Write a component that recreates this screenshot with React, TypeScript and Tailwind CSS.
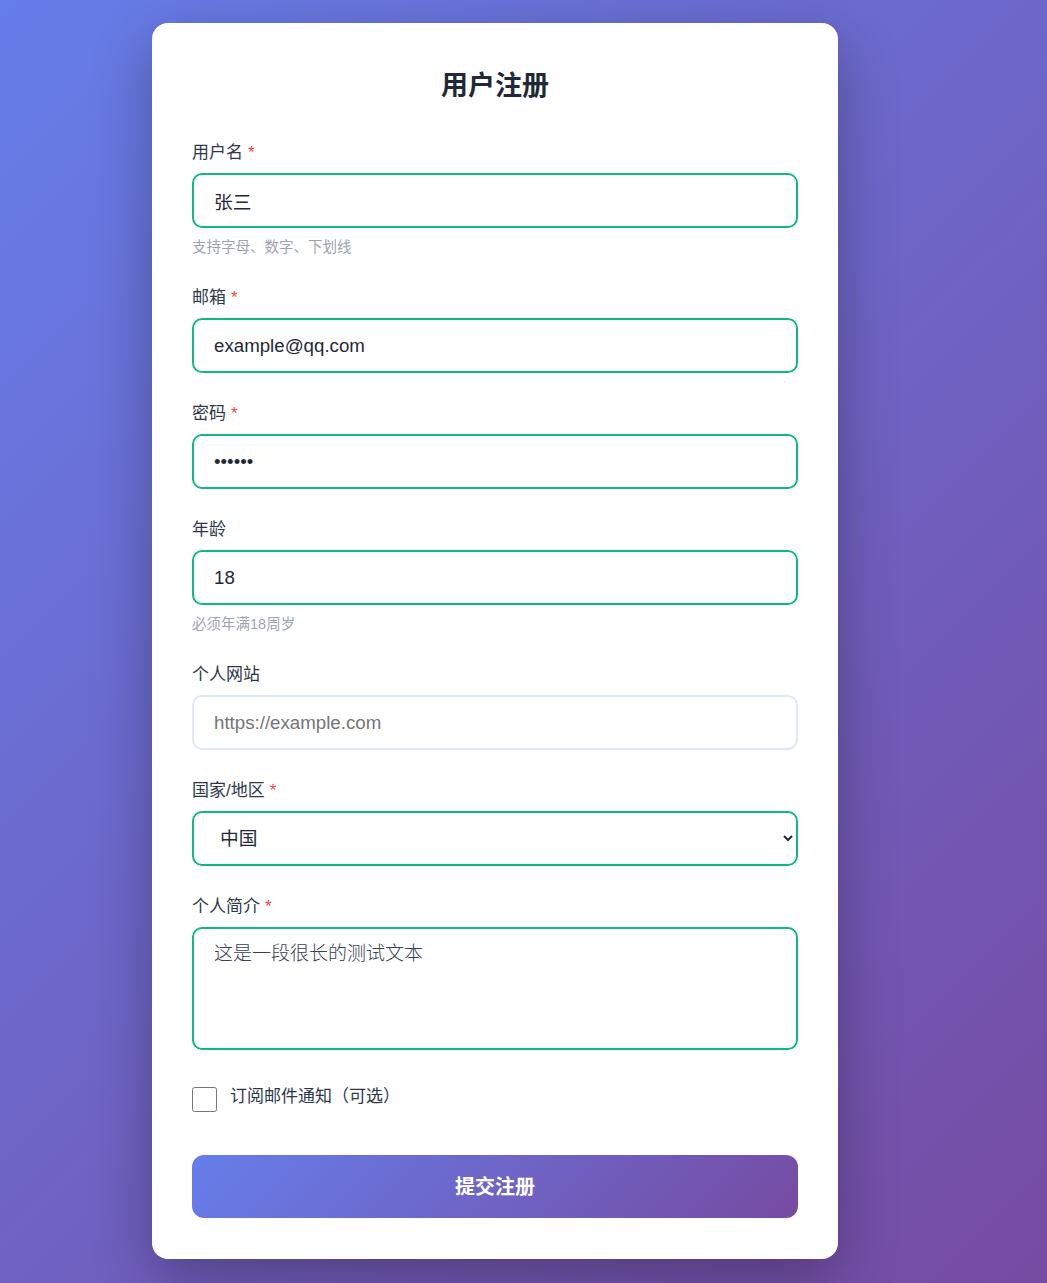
import React from 'react';

const font = { fontFamily: '"Liberation Sans", "Noto Sans CJK SC", sans-serif' };

function Label({ text, required }: { text: string; required?: boolean }) {
  return (
    <label className="block text-[17px] leading-[25px] font-normal text-[#2d3748] mb-[8px]">
      {text}
      {required && <span className="text-[#ef4444] ml-[5px]">*</span>}
    </label>
  );
}

function Hint({ text }: { text: string }) {
  return <p className="mt-[10px] text-[14.5px] leading-[19px] text-[#9ca3af]">{text}</p>;
}

const inputCls =
  'w-full h-[55px] px-[20px] rounded-[10px] border-2 bg-white text-[18.7px] text-[#1f2937] outline-none';

export default function App() {
  return (
    <div
      className="min-h-screen bg-[linear-gradient(135deg,#667eea_0%,#764ba2_100%)] pl-[152px] pt-[23px] pb-[25px]"
      style={font}
    >
      <div className="w-[686px] bg-white rounded-[16px] px-[40px] pt-[41px] pb-[41px] shadow-[0_20px_60px_rgba(0,0,0,0.3)]">
        <h1 className="text-center text-[27px] leading-[44px] font-bold text-[#1f2937] mb-[32px]">用户注册</h1>

        <div className="mb-[28px]">
          <Label text="用户名" required />
          <input className={`${inputCls} border-[#10b981]`} defaultValue="张三" />
          <Hint text="支持字母、数字、下划线" />
        </div>

        <div className="mb-[28px]">
          <Label text="邮箱" required />
          <input className={`${inputCls} border-[#10b981]`} defaultValue="example@qq.com" />
        </div>

        <div className="mb-[28px]">
          <Label text="密码" required />
          <input type="password" className={`${inputCls} border-[#10b981]`} defaultValue="123456" />
        </div>

        <div className="mb-[28px]">
          <Label text="年龄" />
          <input className={`${inputCls} border-[#10b981]`} defaultValue="18" />
          <Hint text="必须年满18周岁" />
        </div>

        <div className="mb-[28px]">
          <Label text="个人网站" />
          <input
            className={`${inputCls} border-[#e2e8f0] placeholder:text-[#757575]`}
            placeholder="https://example.com"
          />
        </div>

        <div className="mb-[28px]">
          <Label text="国家/地区" required />
          <select className={`${inputCls} border-[#10b981] px-[22px]`} defaultValue="cn">
            <option value="cn">中国</option>
            <option value="us">美国</option>
          </select>
        </div>

        <div className="mb-[37px]">
          <Label text="个人简介" required />
          <textarea
            className="block w-full h-[123px] px-[20px] py-[12px] rounded-[10px] border-2 border-[#10b981] text-[19px] leading-[26px] text-[#374151] font-light outline-none resize-none"
            defaultValue="这是一段很长的测试文本"
          />
        </div>

        <div className="flex items-start gap-[13px] mb-[43px]">
          <input type="checkbox" className="w-[25px] h-[25px] m-0 shrink-0" />
          <span className="text-[17px] leading-[20px] text-[#2d3748]">订阅邮件通知（可选）</span>
        </div>

        <button className="w-full h-[63px] rounded-[12px] bg-[linear-gradient(135deg,#667eea_0%,#764ba2_100%)] text-white text-[20px] font-bold">
          提交注册
        </button>
      </div>
    </div>
  );
}
